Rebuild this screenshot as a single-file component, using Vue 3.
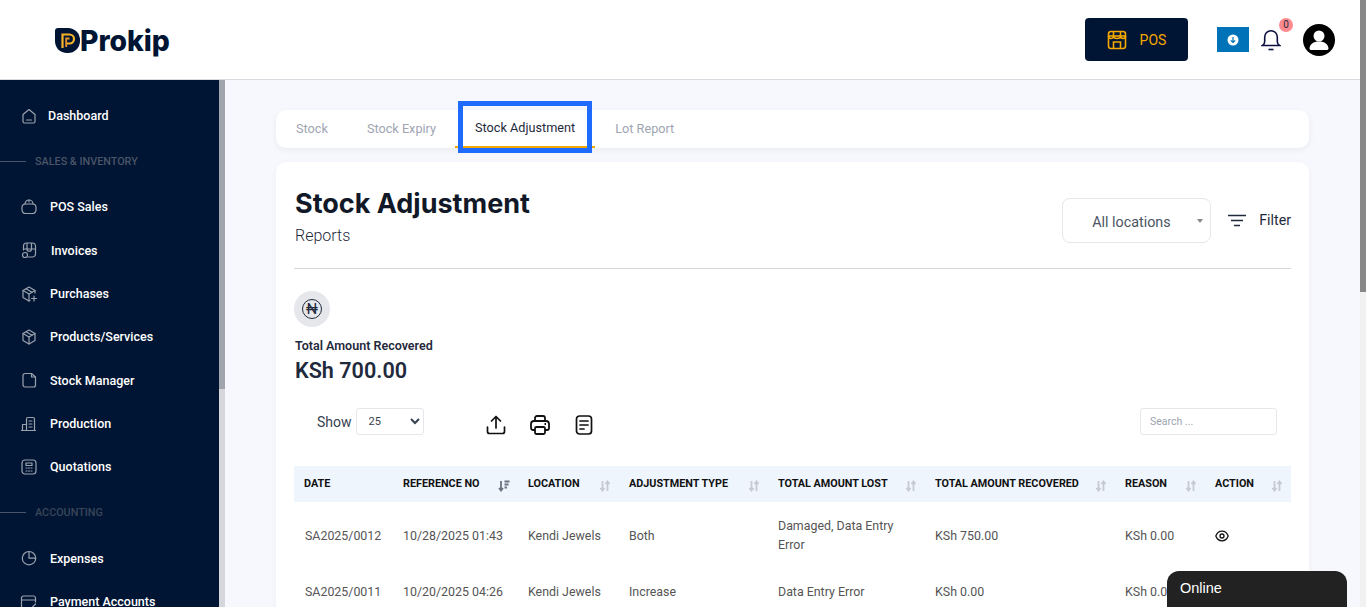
<script setup>
const navTop = { name: "Dashboard", x: 48, paths: ["M3 7.500 9 2.500l6 5v7a1.500 1.500 0 0 1-1.500 1.500h-9A1.500 1.500 0 0 1 3 14.500z", "M6.500 13h5"] };

const nav = [
  { section: "SALES & INVENTORY", dim: false },
  { name: "POS Sales", x: 50, paths: ["M2 9.500a3.500 3.500 0 0 1 3.500-3.500h7A3.500 3.500 0 0 1 16 9.500v2.500a3.500 3.500 0 0 1-3.500 3.500h-7A3.500 3.500 0 0 1 2 12z", "M5 6a4 4 0 0 1 8 0", "M9 2v2"] },
  { name: "Invoices", x: 51, paths: ["M3.500 9V5a3 3 0 0 1 3-3h6a3 3 0 0 1 3 3v8a3 3 0 0 1-3 3H8", "M3.500 8h12", "M7 2.500V8", "M11.500 2.500V8", "M7 8a2 2 0 0 0 4.500 0", "M5 11.500a2.500 2.500 0 1 0 0 5 2.500 2.500 0 0 0 0-5z"] },
  { name: "Purchases", x: 50, paths: ["M15 8V5.500L9 2 3 5.500v7L9 16l1-.5", "M3 5.500 9 9l6-3.500", "M9 9v7", "M6 3.700 12 7.300", "M14 11v5", "M11.500 13.500h5"] },
  { name: "Products/Services", x: 50, paths: ["M9 2l6 3.500v7L9 16l-6-3.500v-7z", "M3 5.500 9 9l6-3.500", "M9 9v7", "M6 3.800l6 3.400"] },
  { name: "Stock Manager", x: 50, paths: ["M3 4.500A2 2 0 0 1 5 2.500h6.500l4 3.500v8a2 2 0 0 1-2 2H5a2 2 0 0 1-2-2z", "M11.500 2.500V6h4"] },
  { name: "Production", x: 50, paths: ["M2.500 15.500V9.500h4", "M6.500 15.500V4a1.500 1.500 0 0 1 1.500-1.500h5a1.500 1.500 0 0 1 1.500 1.500v11.500z", "M1.500 15.500h14", "M9 6h3", "M9 9h3", "M9 12h3"] },
  { name: "Quotations", x: 50, paths: ["M5 2h8a3 3 0 0 1 3 3v8a3 3 0 0 1-3 3H5a3 3 0 0 1-3-3V5a3 3 0 0 1 3-3z", "M6 5h6v2.500H6z", "M6 10h1", "M8.500 10h1", "M11 10h1", "M6 13h1", "M8.500 13h1", "M11 13h1"] },
  { section: "ACCOUNTING", dim: true },
  { name: "Expenses", x: 50, paths: ["M9 2.500a6.700 6.700 0 1 0 6.700 6.700", "M9 9.200V2.500a6.700 6.700 0 0 1 6.700 6.700z"] },
  { name: "Payment Accounts", x: 50, paths: ["M15.500 9V5a2 2 0 0 0-2-2h-10a2 2 0 0 0-2 2v8a2 2 0 0 0 2 2H9", "M1.500 7h14", "M11 15.500l4.500-4.500"] },
];

const tabs = ["Stock", "Stock Expiry", "Stock Adjustment", "Lot Report"];

const columns = [
  { label: "Date", width: 99, sort: "" },
  { label: "Reference No", width: 125, sort: "active" },
  { label: "Location", width: 101, sort: "idle" },
  { label: "Adjustment Type", width: 149, sort: "idle" },
  { label: "Total Amount Lost", width: 157, sort: "idle" },
  { label: "Total Amount Recovered", width: 190, sort: "idle" },
  { label: "Reason", width: 90, sort: "idle" },
  { label: "Action", width: 86, sort: "idle" },
];

const rows = [
  ["SA2025/0012", "10/28/2025 01:43", "Kendi Jewels", "Both", "Damaged, Data Entry Error", "KSh 750.00", "KSh 0.00"],
  ["SA2025/0011", "10/20/2025 04:26", "Kendi Jewels", "Increase", "Data Entry Error", "KSh 0.00", "KSh 0.00"],
];
</script>

<template>
  <div class="screen">
    <div class="page">
      <header class="topbar">
        <div class="logo">
          <svg width="25" height="25" viewBox="0 0 25 25">
            <path d="M3 0h10a12 12 0 0 1 12 12v1a12 12 0 0 1-12 12h-1C5 25 0 20 0 13V3a3 3 0 0 1 3-3z" fill="#001533" />
            <path d="M7.500 20V6.500h7a4.500 4.500 0 0 1 0 9h-2.500" fill="none" stroke="#f5b32a" stroke-width="2.200" />
            <path d="M11.200 19v-8.500h3.300" fill="none" stroke="#e8962a" stroke-width="1.800" />
          </svg>
          <span class="logo-text">Prokip</span>
        </div>
        <div class="top-actions">
          <button class="pos-btn">
            <svg width="20" height="20" viewBox="0 0 20 20" fill="none" stroke="#f5a800" stroke-width="1.600">
              <rect x="1.500" y="1.500" width="17" height="17" rx="2.500" />
              <path d="M1.500 6h17" />
              <path d="M6.500 2v4M13.500 2v4" />
              <path d="M1.500 6a2.500 2.500 0 0 0 5 0 3.500 2.500 0 0 0 7 0 2.500 2.500 0 0 0 5 0" />
              <path d="M6.500 18v-6h7v6" />
            </svg>
            <span>POS</span>
          </button>
          <div class="download">
            <svg width="12" height="12" viewBox="0 0 12 12">
              <circle cx="6" cy="6" r="5.500" fill="#fff" />
              <path d="M6 3v5.500M3.800 6.300 6 8.500l2.200-2.200" fill="none" stroke="#0072b8" stroke-width="1.200" />
            </svg>
          </div>
          <div class="bell">
            <svg width="20" height="22" viewBox="0 0 20 22" fill="none" stroke="#0b1040" stroke-width="1.600">
              <path d="M1.500 16.500c1.500-1 2.200-2 2.200-4V8a6.300 6.300 0 0 1 12.600 0v4.500c0 2 .7 3 2.200 4z" />
              <path d="M7.500 20.500h5" />
            </svg>
            <span class="badge">0</span>
          </div>
          <svg class="avatar" width="32" height="32" viewBox="0 0 32 32">
            <circle cx="16" cy="16" r="16" fill="#000" />
            <circle cx="16" cy="12" r="5.500" fill="#fff" />
            <path d="M6.500 25c0-5 4-7.500 9.500-7.500s9.500 2.500 9.500 7.500a2 2 0 0 1-2 1H8.500a2 2 0 0 1-2-1z" fill="#fff" />
          </svg>
        </div>
      </header>

      <div class="body">
        <aside class="sidebar">
          <nav class="nav">
            <a class="nav-item">
              <svg class="nav-icon" width="18" height="18" viewBox="0 0 18 18">
                <path v-for="d in navTop.paths" :key="d" :d="d" />
              </svg>
              <span :style="{ marginLeft: navTop.x - 38 + 'px' }">{{ navTop.name }}</span>
            </a>
            <template v-for="item in nav" :key="item.name || item.section">
              <div v-if="item.section" class="nav-section" :class="{ dim: item.dim }">
                <i></i>
                <span>{{ item.section }}</span>
              </div>
              <a v-else class="nav-item">
                <svg class="nav-icon" width="18" height="18" viewBox="0 0 18 18">
                  <path v-for="d in item.paths" :key="d" :d="d" />
                </svg>
                <span :style="{ marginLeft: item.x - 38 + 'px' }">{{ item.name }}</span>
              </a>
            </template>
          </nav>
          <div class="side-scroll"><div class="side-thumb"></div></div>
        </aside>

        <main class="main">
          <div class="tabs">
            <div v-for="tab in tabs" :key="tab" class="tab" :class="{ active: tab === 'Stock Adjustment' }">
              {{ tab }}
            </div>
          </div>

          <section class="card">
            <div class="card-head">
              <div>
                <h1>Stock Adjustment</h1>
                <p>Reports</p>
              </div>
              <div class="head-right">
                <div class="loc-select">All locations</div>
                <svg class="filter-icon" width="18" height="13" viewBox="0 0 18 13" stroke="#1f2a3c" stroke-width="1.600">
                  <path d="M0 1.500h18M3 6.500h12M6 11.500h6" />
                </svg>
                <span class="filter">Filter</span>
              </div>
            </div>

            <div class="summary">
              <div class="coin"><span>₦</span></div>
              <div class="sum-label">Total Amount Recovered</div>
              <div class="sum-value">KSh 700.00</div>
            </div>

            <div class="tools">
              <label class="show">
                Show
                <select>
                  <option>25</option>
                </select>
              </label>
              <div class="tool-icons">
                <svg width="20" height="20" viewBox="0 0 20 20" fill="none" stroke="#111" stroke-width="1.700" stroke-linecap="round" stroke-linejoin="round">
                  <path d="M1.500 12v4.500a2 2 0 0 0 2 2h13a2 2 0 0 0 2-2V12" />
                  <path d="M10 13V1.500M5.500 6 10 1.500 14.500 6" />
                </svg>
                <svg width="20" height="20" viewBox="0 0 20 20" fill="none" stroke="#111" stroke-width="1.800" stroke-linejoin="round">
                  <path d="M5 6V3a2 2 0 0 1 2-2h6a2 2 0 0 1 2 2v3" />
                  <path d="M5 15H3a2 2 0 0 1-2-2V9a3 3 0 0 1 3-3h12a3 3 0 0 1 3 3v4a2 2 0 0 1-2 2h-2" />
                  <rect x="5" y="12" width="10" height="7" rx="1.500" />
                  <path d="M14.500 9h1.500" />
                </svg>
                <svg class="doc-icon" width="18" height="20" viewBox="0 0 18 20" fill="none" stroke="#111" stroke-width="1.700" stroke-linecap="round">
                  <rect x="1.500" y="1" width="15" height="18" rx="3" />
                  <path d="M5 6h8M5 10h8M5 14h4" />
                </svg>
              </div>
              <input class="search" placeholder="Search ..." />
            </div>

            <table class="grid">
              <colgroup>
                <col v-for="col in columns" :key="col.label" :style="{ width: col.width + 'px' }" />
              </colgroup>
              <thead>
                <tr>
                  <th v-for="col in columns" :key="col.label">
                    {{ col.label }}
                    <svg v-if="col.sort" class="sort" :class="col.sort" width="12" height="12" viewBox="0 0 12 12" fill="none" stroke-width="1.800">
                      <template v-if="col.sort === 'active'">
                        <path d="M3 1v9.500M1 8l2 2.500L5 8" stroke="#6b7280" />
                        <path d="M6.500 1.500h5M6.500 4.500h4M6.500 7.500h2.500" stroke="#6b7280" />
                      </template>
                      <template v-else>
                        <path d="M3.500 1v9.500M1.500 8l2 2.500L5.500 8" stroke="#c5cad3" />
                        <path d="M8.500 11V1.500M6.500 4l2-2.500 2 2.500" stroke="#c5cad3" />
                      </template>
                    </svg>
                  </th>
                </tr>
              </thead>
              <tbody>
                <tr v-for="(row, i) in rows" :key="row[0]">
                  <td v-for="cell in row" :key="cell">{{ cell }}</td>
                  <td>
                    <svg v-if="i === 0" class="eye" width="14" height="12" viewBox="0 0 14 12" fill="none" stroke="#111" stroke-width="1.300">
                      <path d="M.8 6C2 3 4.200 1.200 7 1.200S12 3 13.200 6C12 9 9.800 10.800 7 10.800S2 9 .8 6z" />
                      <circle cx="7" cy="6" r="2" />
                    </svg>
                  </td>
                </tr>
              </tbody>
            </table>
          </section>
          <div class="online">Online</div>
        </main>
      </div>
    </div>
    <div class="page-scroll"><div class="page-thumb"></div></div>
  </div>
</template>

<style>
html,
body {
  margin: 0;
  overflow: hidden;
}
</style>

<style scoped>
.screen {
  display: flex;
  height: 607px;
  overflow: hidden;
  font-family: Roboto, "Liberation Sans", sans-serif;
  background: #f6f8fd;
}
.page {
  flex: 1;
  min-width: 0;
  display: flex;
  flex-direction: column;
}
.page-scroll {
  width: 6px;
  background: #f1f1f1;
}
.page-thumb {
  height: 292px;
  background: #888;
}

.topbar {
  height: 79px;
  flex-shrink: 0;
  background: #fff;
  border-bottom: 1px solid #d8dadf;
  display: flex;
  align-items: center;
  justify-content: space-between;
  padding: 0 25px 0 55px;
}
.logo {
  display: flex;
  align-items: center;
  margin-top: 2px;
}
.logo-text {
  font-family: Inter, sans-serif;
  font-weight: 800;
  font-size: 28.300px;
  color: #001533;
}
.top-actions {
  display: flex;
  align-items: center;
}
.pos-btn {
  width: 103px;
  height: 43px;
  margin-right: 29px;
  border: 0;
  border-radius: 4px;
  background: #001533;
  color: #f5a800;
  font: 400 14px Roboto, sans-serif;
  display: flex;
  align-items: center;
  justify-content: center;
  gap: 13px;
}
.download {
  width: 32px;
  height: 25px;
  background: #0072b8;
  display: flex;
  align-items: center;
  justify-content: center;
  margin-right: 12px;
}
.bell {
  position: relative;
  display: flex;
  margin-right: 22px;
}
.badge {
  position: absolute;
  left: 18px;
  top: -11px;
  width: 14px;
  height: 14px;
  border-radius: 50%;
  background: #ff8a8f;
  color: #1f2a3c;
  font-size: 10px;
  line-height: 14px;
  text-align: center;
}

.body {
  flex: 1;
  min-height: 0;
  display: flex;
}
.sidebar {
  width: 225px;
  flex-shrink: 0;
  display: flex;
  background: #001533;
}
.nav {
  flex: 1;
  padding-top: 14px;
  overflow: hidden;
}
.nav-item {
  height: 43.330px;
  display: flex;
  align-items: center;
  padding-left: 20px;
  color: #fff;
  font-size: 12.500px;
  font-weight: 500;
  white-space: nowrap;
  box-sizing: border-box;
}
.nav-icon {
  flex-shrink: 0;
  fill: none;
  stroke: #9ba2ae;
  stroke-width: 1.200;
  stroke-linejoin: round;
  stroke-linecap: round;
}
.nav-section {
  height: 48px;
  display: flex;
  align-items: center;
  color: #4a5467;
  font-size: 10.800px;
  font-weight: 500;
}
.nav-section.dim {
  color: #3a4558;
}
.nav-section i {
  width: 26px;
  height: 1px;
  background: #4a5467;
  margin-right: 9px;
}
.side-scroll {
  width: 6px;
  background: #d5d7dc;
}
.side-thumb {
  height: 309px;
  background: #a0a4ad;
}

.main {
  position: relative;
  flex: 1;
  min-width: 0;
  padding: 30px 51px 0;
  overflow: hidden;
}
.tabs {
  height: 38px;
  box-sizing: border-box;
  padding: 0 0 2px 20px;
  background: #fff;
  border-radius: 10px;
  box-shadow: 0 2px 6px rgba(30, 40, 70, 0.06);
  display: flex;
  align-items: center;
  font-size: 12.700px;
  color: #a0a5b1;
}
.tab {
  margin-right: 39px;
  white-space: nowrap;
}
.tab.active {
  position: relative;
  color: #1f2a3c;
  margin: -2px 40px 0 0;
  z-index: 1;
}
.tab.active::before {
  content: "";
  position: absolute;
  left: -17px;
  right: -17px;
  top: -19px;
  bottom: -18px;
  border: 5px solid #1f6bff;
  box-sizing: border-box;
  z-index: 1;
}
.tab.active::after {
  content: "";
  position: absolute;
  left: -20px;
  right: -20px;
  bottom: -13px;
  height: 2px;
  background: #f5a800;
}

.card {
  margin-top: 14px;
  background: #fff;
  border-radius: 10px;
  padding: 18px 18px 0;
  box-shadow: 0 2px 6px rgba(30, 40, 70, 0.04);
}
.card-head {
  display: flex;
  justify-content: space-between;
  align-items: flex-start;
  height: 88px;
  border-bottom: 1px solid #d4d6da;
}
h1 {
  margin: 7px 0 0 1px;
  font-family: Inter, sans-serif;
  font-size: 27px;
  line-height: 34px;
  font-weight: 700;
  color: #111827;
}
.card-head p {
  margin: 3px 0 0 1px;
  font-size: 16px;
  line-height: 24px;
  font-weight: 300;
  color: #1f2a3c;
}
.head-right {
  display: flex;
  align-items: center;
  margin-top: 18px;
}
.loc-select {
  position: relative;
  width: 149px;
  height: 45px;
  box-sizing: border-box;
  border: 1px solid #e5e7eb;
  border-radius: 8px;
  padding-left: 29px;
  line-height: 46px;
  font-size: 14.300px;
  color: #4b5563;
  margin-right: 17px;
}
.loc-select::after {
  content: "";
  position: absolute;
  right: 7px;
  top: 20px;
  border: 3px solid transparent;
  border-top: 4px solid #888;
}
.filter-icon {
  margin-bottom: 1px;
}
.filter {
  margin: 0 0 2px 13px;
  font-size: 14.200px;
  color: #1f2a3c;
}

.summary {
  padding-top: 22px;
}
.coin {
  width: 36px;
  height: 36px;
  border-radius: 50%;
  background: #e5e7eb;
  display: flex;
  align-items: center;
  justify-content: center;
}
.coin span {
  width: 18px;
  height: 18px;
  border: 1.500px solid #1f2a3c;
  border-radius: 50%;
  font-size: 15px;
  font-weight: 400;
  line-height: 18px;
  text-align: center;
  color: #1f2a3c;
}
.sum-label {
  margin: 11px 0 0 1px;
  font-size: 12.500px;
  line-height: 16px;
  font-weight: 600;
  color: #1f2a3c;
}
.sum-value {
  margin: 2px 0 0 1px;
  font-size: 21.600px;
  line-height: 30px;
  font-weight: 600;
  color: #1f2a3c;
}

.tools {
  margin-top: 22px;
  height: 27px;
  display: flex;
  align-items: center;
  padding-left: 23px;
}
.show {
  display: flex;
  align-items: center;
  gap: 4px;
  font-size: 14px;
  color: #374151;
}
.show select {
  width: 68px;
  height: 27px;
  border: 1px solid #e5e7eb;
  border-radius: 3px;
  background: #fff;
  font: 11px Roboto, sans-serif;
  color: #374151;
  padding-left: 8px;
}
.tool-icons {
  display: flex;
  align-items: center;
  gap: 24px;
  margin: 6px 0 0 62px;
}
.doc-icon {
  margin-left: 1px;
}
.search {
  margin-left: auto;
  margin-right: 14px;
  width: 137px;
  height: 27px;
  box-sizing: border-box;
  border: 1px solid #e5e7eb;
  border-radius: 3px;
  padding: 0 9px;
  font: 10.500px Roboto, sans-serif;
  outline: none;
}
.search::placeholder {
  color: #9ca3af;
}

.grid {
  margin-top: 31px;
  width: 997px;
  table-layout: fixed;
  border-collapse: collapse;
}
th {
  position: relative;
  height: 34px;
  padding: 0 0 2px 10px;
  background: #eef5fd;
  text-align: left;
  font-size: 10.800px;
  font-weight: 700;
  color: #111;
  text-transform: uppercase;
  white-space: nowrap;
}
.sort {
  position: absolute;
  right: 8px;
  top: 14px;
}
td {
  padding: 14px 10px;
  font-size: 12.400px;
  line-height: 19px;
  color: #555;
  vertical-align: middle;
}
td:first-child {
  padding-left: 11px;
  padding-right: 0;
}
td .eye {
  display: block;
  margin-top: 2px;
}

.online {
  position: absolute;
  left: 942px;
  top: 491px;
  width: 180px;
  height: 60px;
  box-sizing: border-box;
  padding: 9px 13px;
  border-radius: 12px 12px 0 0;
  background: #222;
  color: #fff;
  font: 14.500px/17px "Liberation Sans", sans-serif;
}
</style>
